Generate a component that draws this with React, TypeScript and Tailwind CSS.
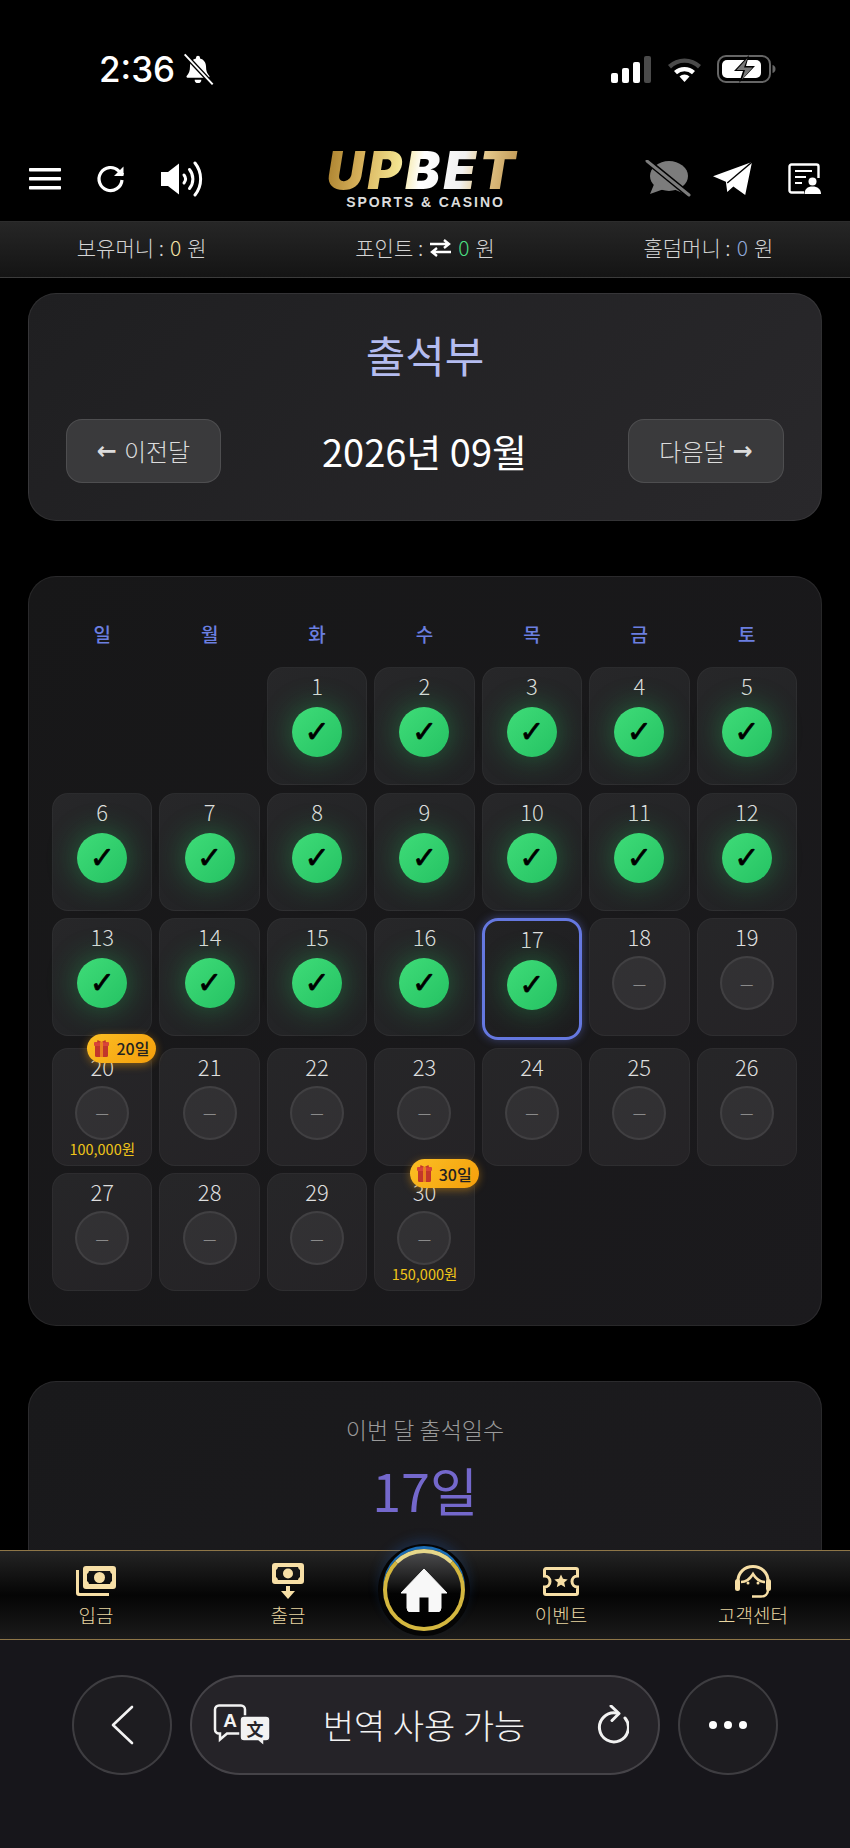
import React from "react";

const FONT = { fontFamily: '"Noto Sans CJK KR", "Noto Sans", sans-serif' };
const ARROW = { fontFamily: '"DejaVu Sans", sans-serif' };

function Cell({ day }: { day: number }) {
  const done = day <= 17;
  const today = day === 17;
  const badge = day === 20 ? "20일" : day === 30 ? "30일" : null;
  const reward = day === 20 ? "100,000원" : day === 30 ? "150,000원" : null;
  return (
    <div
      className={
        today
          ? "relative flex h-[122px] flex-col items-center rounded-[16px] border-[3px] border-[#6578e0] bg-[linear-gradient(145deg,#232325,#1d1d1f)] pt-[2px] shadow-[0_0_10px_rgba(101,120,224,0.45)]"
          : done
          ? "relative flex h-[118px] flex-col items-center rounded-[16px] border border-white/[0.04] bg-[linear-gradient(145deg,#272729,#212224)] pt-[2px]"
          : "relative flex h-[118px] flex-col items-center rounded-[16px] border border-white/[0.04] bg-[linear-gradient(145deg,#262628,#252326)] pt-[2px]"
      }
    >
      {badge && (
        <div className="absolute right-[-5px] top-[-15px] z-10 flex h-[29px] w-[69px] items-center justify-center gap-[7px] rounded-full bg-[linear-gradient(135deg,#fbbf24,#f59e0b)] text-[16px] font-medium text-[#222] shadow-[0_2px_8px_rgba(245,158,11,0.45)]">
          <svg width="15" height="17" viewBox="0 0 15 17">
            <rect x="1" y="4" width="13" height="13" rx="1.5" fill="#c2362b" />
            <rect x="0" y="2" width="15" height="4" rx="1" fill="#d8443a" />
            <rect x="6" y="2" width="3" height="15" fill="#e8801f" />
            <path d="M7.5 2 L3.5 0 L3 2.5 Z M7.5 2 L11.5 0 L12 2.5 Z" fill="#c2362b" />
          </svg>
          <span>{badge}</span>
        </div>
      )}
      <div className="h-[30px] text-[22px] font-light leading-[30px] text-[#dedede]">{day}</div>
      {done ? (
        <div
          className="mt-[7px] flex h-[50px] w-[50px] items-center justify-center rounded-full bg-[linear-gradient(135deg,#3fdc78,#25c263)] text-[30px] leading-none text-black shadow-[0_0_30px_rgba(34,197,94,0.42)] [-webkit-text-stroke:0.7px_black]"
          style={{ fontFamily: '"DejaVu Sans", sans-serif' }}
        >
          ✓
        </div>
      ) : (
        <div className="mt-[5px] flex h-[54px] w-[54px] items-center justify-center rounded-full border-2 border-white/[0.07] bg-white/[0.06] text-[15px] leading-none text-[#8a8a8a]">
          —
        </div>
      )}
      {reward && <div className="mt-[1px] text-[14.5px] leading-[16px] text-[#f0c419]">{reward}</div>}
    </div>
  );
}

function Bal({ label, value, color, swap }: { label: string; value: string; color: string; swap?: boolean }) {
  return (
    <div className="flex items-center justify-center gap-[6px] pb-[3px] text-[21px] font-light text-[#d4d4d4]">
      <span>{label} :</span>
      {swap && (
        <svg width="23" height="18" viewBox="0 0 23 18" fill="none" stroke="#fff" strokeWidth="2.4">
          <path d="M1 5h19M15 1l5 4-5 4" />
          <path d="M22 13H3M8 9l-5 4 5 4" />
        </svg>
      )}
      <span className={color}>{value}</span>
      <span>원</span>
    </div>
  );
}

function NavItem({ label, children }: { label: string; children: React.ReactNode }) {
  return (
    <div className="flex flex-col items-center">
      <div className="flex h-[38px] items-center justify-center">{children}</div>
      <div className="mt-[2px] text-[19px] font-light leading-[26px] text-[#e8d5a0]">{label}</div>
    </div>
  );
}

export default function App() {
  const cells: (number | null)[] = [null, null];
  for (let i = 1; i <= 30; i++) cells.push(i);
  return (
    <div className="flex h-[1848px] w-[850px] flex-col overflow-hidden bg-black" style={FONT}>
      {/* status bar */}
      <div className="flex h-[139px] shrink-0 items-start justify-between pl-[99px] pr-[74px] pt-[47px]">
        <div className="flex items-center gap-[7px]">
          <span className="text-[35px] font-medium leading-[44px] text-white" style={{ fontFamily: "Inter, sans-serif" }}>
            2:36
          </span>
          <svg width="32" height="34" viewBox="0 0 24 24">
            <path d="M12 2a1.5 1.5 0 0 0-1.5 1.5v.6C7.6 4.8 6 7.3 6 10c0 3.5-.8 5.6-2.5 7.2-.4.5 0 1.3.6 1.3h15.8c.6 0 1-.8.6-1.3C18.8 15.6 18 13.5 18 10c0-2.7-1.6-5.2-4.5-5.9v-.6A1.5 1.5 0 0 0 12 2z" fill="#fff" />
            <path d="M9.5 20a2.5 2.5 0 0 0 5 0z" fill="#fff" />
            <path d="M2 1l21 22.5" stroke="#000" strokeWidth="3.4" />
            <path d="M2 1l21 22.5" stroke="#fff" strokeWidth="1.5" />
          </svg>
        </div>
        <div className="flex items-center gap-[15px] pt-[8px]">
          <svg width="41" height="27" viewBox="0 0 41 27">
            <rect x="0" y="17" width="7" height="10" rx="2" fill="#fff" />
            <rect x="11" y="12" width="7" height="15" rx="2" fill="#fff" />
            <rect x="22" y="6" width="7" height="21" rx="2" fill="#fff" />
            <rect x="33" y="0" width="7" height="27" rx="2" fill="#4a4a4a" />
          </svg>
          <svg width="35" height="26" viewBox="0 0 35 26">
            <path d="M1 9a24 24 0 0 1 33 0l-3 3.4a19 19 0 0 0-27 0z" fill="#4a4a4a" />
            <path d="M7 15a16 16 0 0 1 21 0l-3 3.3a11 11 0 0 0-15 0z" fill="#fff" />
            <path d="M12.5 20.5a7.5 7.5 0 0 1 10 0l-5 5.5z" fill="#fff" />
          </svg>
          <svg width="59" height="28" viewBox="0 0 59 28">
            <rect x="1" y="1" width="52" height="26" rx="8" fill="none" stroke="#666" strokeWidth="2" />
            <path d="M55.5 10c2 .6 3 2 3 4s-1 3.4-3 4z" fill="#666" />
            <rect x="5" y="5" width="39" height="18" rx="5" fill="#fff" />
            <path d="M32 0L17 16h9l-4 12 16-17h-9z" fill="#000" />
            <path d="M30.5 3L19.5 15h8.5l-3 9.5L35.5 12.5h-8.5z" fill="#777" />
          </svg>
        </div>
      </div>

      {/* header */}
      <div className="grid h-[82px] shrink-0 grid-cols-[1fr_auto_1fr] items-center pb-[3px] pl-[29px] pr-[28px]">
        <div className="flex items-center">
          <svg width="32" height="22" viewBox="0 0 32 22" fill="#fff">
            <rect x="0" y="0" width="32" height="3.6" rx="0.8" />
            <rect x="0" y="9" width="32" height="3.6" rx="0.8" />
            <rect x="0" y="18" width="32" height="3.6" rx="0.8" />
          </svg>
          <svg className="ml-[35px]" width="30" height="30" viewBox="0 0 30 30" fill="none" stroke="#fff" strokeWidth="3.2">
            <path d="M26 16a11.5 11.5 0 1 1-3.4-9.2L27 11" />
            <path d="M27.5 2.5v9.5h-9.5z" fill="#fff" stroke="none" />
          </svg>
          <svg className="ml-[35px]" width="42" height="36" viewBox="0 0 42 36" fill="none" stroke="#fff" strokeLinecap="round">
            <path d="M0 11h7L18 2.5v31L7 25H0z" fill="#fff" stroke="none" />
            <path d="M23 14c2 2.5 2 5.5 0 8" strokeWidth="3" />
            <path d="M28.5 8.5c4.5 5.5 4.5 13.5 0 19" strokeWidth="3" />
            <path d="M34 2c7.5 9.5 7.5 22.5 0 32" strokeWidth="3" />
          </svg>
        </div>
        <div className="flex flex-col items-center pt-[3px]">
          <div
            className="bg-[linear-gradient(100deg,#a97f2c_0%,#d6b05a_18%,#f2e28e_36%,#ffffff_48%,#f0f0f0_68%,#e6c98c_78%,#b58a45_100%)] bg-clip-text pr-[6px] text-[52px] font-black italic leading-[44px] tracking-[3.5px] text-transparent"
            style={{ fontFamily: "Inter, sans-serif" }}
          >
            UPBET
          </div>
          <div
            className="text-[14px] font-bold leading-[18px] tracking-[1.9px] text-[#dcdcdc]"
            style={{ fontFamily: '"Liberation Sans", sans-serif' }}
          >
            SPORTS &amp; CASINO
          </div>
        </div>
        <div className="flex items-center justify-end">
          <svg width="46" height="37" viewBox="0 0 46 37">
            <ellipse cx="24" cy="16" rx="19" ry="15" fill="#7c7c7c" />
            <path d="M10 22L5 34l14-5z" fill="#7c7c7c" />
            <path d="M26 28l14 6-4-10z" fill="#7c7c7c" />
            <path d="M1 0L44 35" stroke="#000" strokeWidth="6" />
            <path d="M2 1L44 35" stroke="#7c7c7c" strokeWidth="3" strokeLinecap="round" />
          </svg>
          <svg className="ml-[22px]" width="39" height="33" viewBox="0 0 115 97" fill="#fff">
            <path d="M115 0L0 42l38 16 4 30 18-16 35 25z" />
            <path d="M115 0L42 62" stroke="#000" strokeWidth="4" fill="none" />
          </svg>
          <svg className="ml-[36px]" width="34" height="31" viewBox="0 0 34 31" fill="none" stroke="#fff" strokeWidth="2.4">
            <path d="M16 29.5H3.5a2 2 0 0 1-2-2v-24a2 2 0 0 1 2-2h25a2 2 0 0 1 2 2V15" />
            <path d="M7 8h17M7 14h11M7 20h7" strokeWidth="2.2" />
            <circle cx="24.5" cy="18.5" r="4" fill="#fff" stroke="none" />
            <path d="M16.5 31c0-5 3-7.5 8-7.5s8.5 2.5 8.5 7.5z" fill="#fff" stroke="none" />
          </svg>
        </div>
      </div>

      {/* balance bar */}
      <div className="grid h-[57px] shrink-0 grid-cols-3 items-center border-y border-white/10 bg-[linear-gradient(180deg,#262626,#141414)]">
        <Bal label="보유머니" value="0" color="text-[#f5e3a5]" />
        <Bal label="포인트" value="0" color="text-[#4ade80]" swap />
        <Bal label="홀덤머니" value="0" color="text-[#8fa8d8]" />
      </div>

      {/* content */}
      <div className="min-h-0 flex-1 overflow-hidden px-[28px] pt-[15px]">
        <div className="h-[228px] rounded-[28px] border border-white/[0.07] bg-[linear-gradient(135deg,#1f1f21,#29282b)] px-[37px] pt-[32px]">
          <div className="text-center text-[43px] font-normal leading-[56px] text-[#b4bcf0]">출석부</div>
          <div className="mt-[37px] flex items-center justify-between">
            <div className="flex h-[64px] w-[155px] items-center justify-center gap-[7px] rounded-[16px] border border-white/10 bg-[#3a3a3c] text-[24px] font-light text-[#dcdcdc]">
              <span className="font-bold" style={ARROW}>←</span>
              <span>이전달</span>
            </div>
            <div className="text-[38px] font-normal leading-[50px] text-white">2026년 09월</div>
            <div className="flex h-[64px] w-[156px] items-center justify-center gap-[7px] rounded-[16px] border border-white/10 bg-[#3a3a3c] text-[24px] font-light text-[#dcdcdc]">
              <span>다음달</span>
              <span className="font-bold" style={ARROW}>→</span>
            </div>
          </div>
        </div>

        <div className="mt-[55px] h-[750px] rounded-[28px] border border-white/[0.07] bg-[linear-gradient(135deg,#171718,#1b1a1d)] pl-[23px] pr-[24px] pt-[44px]">
          <div className="grid grid-cols-7 gap-x-[7px] text-center text-[19px] font-medium leading-[26px] text-[#6b7fe0]">
            {["일", "월", "화", "수", "목", "금", "토"].map((d) => (
              <div key={d}>{d}</div>
            ))}
          </div>
          <div className="mt-[20px] grid grid-cols-7 items-start gap-x-[7px] gap-y-[7.5px]">
            {cells.map((d, i) => (d === null ? <div key={i} className="h-[118px]" /> : <Cell key={i} day={d} />))}
          </div>
        </div>

        <div className="mt-[55px] h-[220px] rounded-[28px] border border-white/[0.07] bg-[linear-gradient(135deg,#19191b,#1c1b1e)] pt-[31px] text-center">
          <div className="text-[23px] font-light leading-[32px] text-[#9a9a9a]">이번 달 출석일수</div>
          <div className="mt-[12px] text-[52px] font-normal leading-[66px] text-[#7468cc]">17일</div>
        </div>
      </div>

      {/* bottom nav */}
      <div className="relative grid h-[90px] shrink-0 grid-cols-[192px_192px_81px_192px_192px] items-start border-y border-[#8f7748] bg-[linear-gradient(180deg,#242424_0%,#050505_50%,#1b1b1b_100%)] pt-[11px]">
        <NavItem label="입금">
          <svg width="40" height="30" viewBox="0 0 40 30" fill="#f7dfa6">
            <path d="M0 4v23a3 3 0 0 0 3 3h30v-3H4a1 1 0 0 1-1-1V4z" />
            <path fillRule="evenodd" d="M10 0h27a3 3 0 0 1 3 3v17a3 3 0 0 1-3 3H10a3 3 0 0 1-3-3V3a3 3 0 0 1 3-3zm3 5a4 4 0 0 1-2 3v7a4 4 0 0 1 2 3h21a4 4 0 0 1 2-3V8a4 4 0 0 1-2-3z" />
            <circle cx="23.5" cy="11.5" r="5.5" />
          </svg>
        </NavItem>
        <NavItem label="출금">
          <svg width="32" height="36" viewBox="0 0 32 36" fill="#f7dfa6">
            <path fillRule="evenodd" d="M3 0h26a3 3 0 0 1 3 3v15a3 3 0 0 1-3 3H3a3 3 0 0 1-3-3V3a3 3 0 0 1 3-3zm3 4a4 4 0 0 1-2 3v7a4 4 0 0 1 2 3h20a4 4 0 0 1 2-3V7a4 4 0 0 1-2-3z" />
            <circle cx="16" cy="10.5" r="5" />
            <path d="M14 23h4v5h5l-7 8-7-8h5z" />
          </svg>
        </NavItem>
        <div />
        <NavItem label="이벤트">
          <svg width="36" height="29" viewBox="0 0 36 29" fill="none" stroke="#f7dfa6" strokeWidth="3">
            <path d="M3 1.5h30a1.5 1.5 0 0 1 1.5 1.5v6a5.5 5.5 0 0 0 0 11v6a1.5 1.5 0 0 1-1.5 1.5H3A1.5 1.5 0 0 1 1.5 26v-6a5.5 5.5 0 0 0 0-11V3A1.5 1.5 0 0 1 3 1.5z" />
            <path d="M18 7.5l2 4.3 4.7.6-3.5 3.2 1 4.6-4.2-2.4-4.2 2.4 1-4.6-3.5-3.2 4.7-.6z" fill="#f7dfa6" stroke="none" />
          </svg>
        </NavItem>
        <NavItem label="고객센터">
          <svg width="36" height="33" viewBox="0 0 36 33" fill="none" stroke="#f7dfa6" strokeWidth="3">
            <path d="M3 20v-4C3 7.5 9.5 1.5 18 1.5S33 7.5 33 16v4" />
            <path d="M6 17c4 0 9-3 12-8 3 5 8 8 12 8" strokeWidth="2.5" />
            <rect x="0" y="14" width="5" height="12" rx="2.5" fill="#f7dfa6" stroke="none" />
            <rect x="31" y="14" width="5" height="12" rx="2.5" fill="#f7dfa6" stroke="none" />
            <path d="M33 25c0 4-3 6.5-7 6.5H17" strokeWidth="2.5" />
            <circle cx="13" cy="18" r="1.5" fill="#f7dfa6" stroke="none" />
            <circle cx="23" cy="18" r="1.5" fill="#f7dfa6" stroke="none" />
          </svg>
        </NavItem>
        {/* home button */}
        <div className="absolute left-[383px] top-[-2px] flex h-[82px] w-[82px] items-center justify-center rounded-full border-[4px] border-[#d4b73f] border-t-[#e6d78a] bg-[linear-gradient(180deg,#4a4a4c_0%,#1a1a1a_40%,#030303_55%,#000_100%)] shadow-[0_-3px_0_0_#1a6cb4,0_0_0_5px_#050505,0_-6px_12px_4px_rgba(30,100,200,0.22)]">
          <svg width="46" height="43" viewBox="0 0 46 43" fill="#f8f8f8">
            <path d="M23 0L0 24h6v15a4 4 0 0 0 4 4h8V28h10v15h8a4 4 0 0 0 4-4V24h6z" stroke="#f8f8f8" strokeWidth="1" strokeLinejoin="round" />
          </svg>
        </div>
      </div>

      {/* browser chrome */}
      <div className="flex h-[208px] shrink-0 items-start gap-[18px] bg-[#17161b] pl-[72px] pr-[72px] pt-[35px]">
        <div className="flex h-[100px] w-[100px] shrink-0 items-center justify-center rounded-full border-2 border-white/15 bg-[#1d1c20]">
          <svg width="24" height="40" viewBox="0 0 24 40" fill="none" stroke="#f2f2f2" strokeWidth="2.6" strokeLinecap="round" strokeLinejoin="round">
            <path d="M22 2L3 20l19 18" />
          </svg>
        </div>
        <div className="flex h-[100px] min-w-0 flex-1 items-center rounded-full border-2 border-white/15 bg-[#252328] pl-[21px] pr-[29px]">
          <svg width="58" height="42" viewBox="0 0 58 42">
            <path d="M6 1.5h22a4 4 0 0 1 4 4v20a4 4 0 0 1-4 4H14l-7 6v-6H6a4 4 0 0 1-4-4v-20a4 4 0 0 1 4-4z" fill="none" stroke="#f2f2f2" strokeWidth="2.5" />
            <text x="17" y="23" textAnchor="middle" fontSize="19" fontWeight="700" fill="#f2f2f2" fontFamily="Liberation Sans">A</text>
            <path d="M31 12h22a4 4 0 0 1 4 4v17a4 4 0 0 1-4 4h-2v5l-6-5H31a4 4 0 0 1-4-4V16a4 4 0 0 1 4-4z" fill="#f2f2f2" stroke="#252328" strokeWidth="1.5" />
            <text x="42" y="32" textAnchor="middle" fontSize="17" fontWeight="700" fill="#252328" fontFamily="Noto Sans CJK SC">文</text>
          </svg>
          <div className="mr-[19px] flex-1 text-center text-[34px] font-light leading-[46px] text-[#f2f2f2]">번역 사용 가능</div>
          <svg width="33" height="40" viewBox="0 0 33 40" fill="none" stroke="#f2f2f2" strokeWidth="3" strokeLinecap="round" strokeLinejoin="round">
            <path d="M20 8A14.5 14.5 0 1 0 29 13" />
            <path d="M15 1l8 7.5-7 7" />
          </svg>
        </div>
        <div className="flex h-[100px] w-[100px] shrink-0 items-center justify-center gap-[7px] rounded-full border-2 border-white/15 bg-[#1d1c20]">
          <div className="h-[8px] w-[8px] rounded-full bg-white" />
          <div className="h-[8px] w-[8px] rounded-full bg-white" />
          <div className="h-[8px] w-[8px] rounded-full bg-white" />
        </div>
      </div>
    </div>
  );
}
